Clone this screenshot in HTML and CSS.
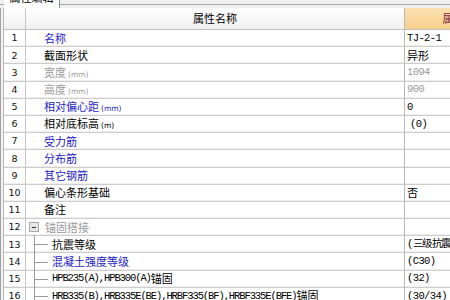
FILE: index.html
```html
<!DOCTYPE html>
<html lang="zh-CN">
<head>
    <meta charset="UTF-8">
    <title>属性编辑</title>
    <link rel="stylesheet" href="styles.css">
</head>
<body>
    <div id="wrap">
        <div class="tabbar">
            <div class="tab"><span>属性编辑</span></div>
        </div>
        <div class="panel">
            <div class="grid">
                <div class="row head">
                    <div class="cell no"></div>
                    <div class="cell name center">属性名称</div>
                    <div class="cell val hval">属性值</div>
                </div>
                <div class="row">
                    <div class="cell no">1</div>
                    <div class="cell name blue">名称</div>
                    <div class="cell val mono">TJ-2-1</div>
                </div>
                <div class="row">
                    <div class="cell no">2</div>
                    <div class="cell name">截面形状</div>
                    <div class="cell val">异形</div>
                </div>
                <div class="row">
                    <div class="cell no">3</div>
                    <div class="cell name gray"><span>宽度<small>(mm)</small></span></div>
                    <div class="cell val gray mono">1094</div>
                </div>
                <div class="row">
                    <div class="cell no">4</div>
                    <div class="cell name gray"><span>高度<small>(mm)</small></span></div>
                    <div class="cell val gray mono">900</div>
                </div>
                <div class="row">
                    <div class="cell no">5</div>
                    <div class="cell name blue"><span>相对偏心距<small>(mm)</small></span></div>
                    <div class="cell val mono">0</div>
                </div>
                <div class="row">
                    <div class="cell no">6</div>
                    <div class="cell name"><span>相对底标高<small>(m)</small></span></div>
                    <div class="cell val mono ind">(0)</div>
                </div>
                <div class="row">
                    <div class="cell no">7</div>
                    <div class="cell name blue">受力筋</div>
                    <div class="cell val"></div>
                </div>
                <div class="row">
                    <div class="cell no">8</div>
                    <div class="cell name blue">分布筋</div>
                    <div class="cell val"></div>
                </div>
                <div class="row">
                    <div class="cell no">9</div>
                    <div class="cell name blue">其它钢筋</div>
                    <div class="cell val"></div>
                </div>
                <div class="row">
                    <div class="cell no">10</div>
                    <div class="cell name">偏心条形基础</div>
                    <div class="cell val">否</div>
                </div>
                <div class="row">
                    <div class="cell no">11</div>
                    <div class="cell name">备注</div>
                    <div class="cell val"></div>
                </div>
                <div class="row">
                    <div class="cell no">12</div>
                    <div class="cell name gray group"><span class="toggle"></span>锚固搭接</div>
                    <div class="cell val"></div>
                </div>
                <div class="row">
                    <div class="cell no">13</div>
                    <div class="cell name child">抗震等级</div>
                    <div class="cell val mono">(三级抗震)</div>
                </div>
                <div class="row">
                    <div class="cell no">14</div>
                    <div class="cell name child blue">混凝土强度等级</div>
                    <div class="cell val mono">(C30)</div>
                </div>
                <div class="row">
                    <div class="cell no">15</div>
                    <div class="cell name child"><span class="code">HPB235(A),HPB300(A)</span>锚固</div>
                    <div class="cell val mono">(32)</div>
                </div>
                <div class="row">
                    <div class="cell no">16</div>
                    <div class="cell name child"><span class="code">HRB335(B),HRB335E(BE),HRBF335(BF),HRBF335E(BFE)</span>锚固</div>
                    <div class="cell val mono">(30/34)</div>
                </div>
            </div>
        </div>
    </div>
</body>
</html>
```

FILE: styles.css
```css
*{margin: 0; padding: 0; box-sizing: border-box;}
body {
    width: 450px;
    height: 300px;
    overflow: hidden;
    background: #fff;
    font-family: "Noto Sans CJK SC", sans-serif;
    font-size: 11px;
    color: #000;
}
#wrap {
    width: 450px;
    height: 300px;
    overflow: hidden;
}
.tabbar {
    height: 8px;
    background: #f0f0f0;
    display: flex;
    align-items: flex-start;
    box-shadow: inset 0 -3px 0 #f0f0f0, inset 0 -4px 0 #a8a8a8;
    padding-left: 4px;
}
.tab {
    width: 56px;
    height: 8px;
    background: #fff;
    border-right: 1px solid #8c8c8c;
    overflow: hidden;
    display: flex;
    align-items: flex-start;
    justify-content: center;
}
.tab span {
    line-height: 11px;
    margin-top: -8px;
}
.panel {
    border-left: 1px solid #a0a0a0;
    padding-left: 2px;
    background: #f4f4f4;
}
.grid {
    border-left: 1px solid #b4b4b4;
    width: 500px;
    background: #fff;
}
.row {
    display: grid;
    grid-template-columns: 22px 378px 95px;
    height: 17.2px;
}
.cell {
    display: flex;
    align-items: center;
    white-space: nowrap;
    border-bottom: 1px solid #cdcdcd;
    box-shadow: inset 0 -1px 0 #efefef;
    line-height: 1;
}
.no {
    justify-content: center;
    border-right: 1px solid #c4c4c4;
    font-family: "DejaVu Sans", sans-serif;
    font-size: 9.5px;
    color: #111;
}
.name {
    padding-left: 18px;
}
.val {
    border-left: 1px solid #b8b8b8;
    padding-left: 2px;
}
.head {
    height: 22px;
}
.head .cell {
    background: linear-gradient(#ffffff, #f1f1f1);
    border-bottom: 1px solid #c0c0c0;
    box-shadow: none;
}
.head .name.center {
    justify-content: center;
    padding-left: 0;
    font-size: 11px;
}
.head .hval {
    background: linear-gradient(#fce1b2, #f8cf8d);
    color: #7a1a3a;
    justify-content: center;
    padding-left: 14px;
}
.blue {
    color: #1c1cc4;
}
.gray {
    color: #9a9a9a;
}
small {
    font-family: "DejaVu Sans", sans-serif;
    font-size: 7.5px;
    margin-left: 2px;
}
.mono {
    font-family: "Liberation Mono", monospace;
    font-size: 10.5px;
    letter-spacing: -0.6px;
}
.val.mono {
    padding-left: 2px;
}
.ind {
    padding-left: 5px !important;
}
.group {
    padding-left: 3px;
}
.toggle {
    position: relative;
    width: 10px;
    height: 10px;
    border: 1px solid #a9a9a9;
    background: #e6e6e6;
    margin-right: 6px;
}
.toggle::after {
    content: "";
    position: absolute;
    left: 2px;
    top: 3.5px;
    width: 4px;
    height: 1px;
    background: #333;
}
.child {
    position: relative;
    padding-left: 26px;
}
.child::before {
    content: "";
    position: absolute;
    left: 8px;
    top: -1px;
    bottom: -1px;
    border-left: 1px solid #9a9a9a;
}
.child::after {
    content: "";
    position: absolute;
    left: 8px;
    top: 50%;
    width: 14px;
    border-top: 1px solid #9a9a9a;
}
.code {
    font-family: "Liberation Mono", monospace;
    font-size: 10.5px;
    letter-spacing: -1.1px;
}
```
